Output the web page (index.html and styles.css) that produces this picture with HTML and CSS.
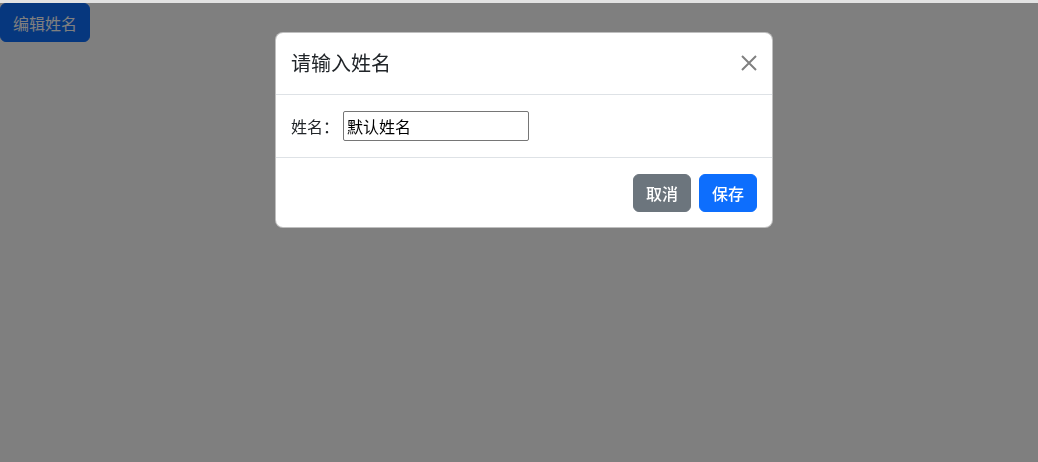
FILE: index.html
```html
<!DOCTYPE html>
<html lang="zh-CN">
<head>
<meta charset="utf-8">
<title>编辑姓名</title>
<link rel="stylesheet" href="styles.css">
</head>
<body>
<div class="page">
  <button class="btn btn-primary btn-open" type="button">编辑姓名</button>
</div>
<div class="backdrop"></div>
<div class="modal">
  <div class="modal-header">
    <h5 class="modal-title">请输入姓名</h5>
    <button class="btn-close" type="button" aria-label="关闭">
      <svg viewBox="0 0 16 16" width="16" height="16"><path d="M1 1 L15 15 M15 1 L1 15" stroke="#808080" stroke-width="2" fill="none"/></svg>
    </button>
  </div>
  <div class="modal-body">
    <label class="field-label">姓名：</label>
    <input class="field-input" type="text" value="默认姓名">
  </div>
  <div class="modal-footer">
    <button class="btn btn-secondary" type="button">取消</button>
    <button class="btn btn-primary" type="button">保存</button>
  </div>
</div>
</body>
</html>
```
FILE: styles.css
```css
* { box-sizing: border-box; }
html, body {
  margin: 0;
  height: 100%;
}
body {
  background: #e2e2e2;
  font-family: "Noto Sans CJK SC", "Noto Sans", sans-serif;
  font-size: 16px;
  color: #212529;
  overflow: hidden;
}
.page {
  background: #fff;
  margin-top: 3px;
  height: calc(100% - 3px);
}
.btn {
  font-family: inherit;
  font-size: 16px;
  line-height: 24px;
  padding: 6px 12px;
  border: 1px solid transparent;
  border-radius: 6px;
  color: #fff;
  cursor: pointer;
  font-weight: 500;
}
.btn-primary { background: #0d6efd; border-color: #0d6efd; }
.btn-secondary { background: #6c757d; border-color: #6c757d; }
.btn-open {
  font-weight: 400;
  width: 90px;
  height: 39px;
}
.backdrop {
  position: fixed;
  left: 0; right: 0; bottom: 0; top: 3px;
  background: rgba(0,0,0,.5);
}
.modal {
  position: fixed;
  top: 32px;
  left: 275px;
  width: 498px;
  background: #fff;
  border: 1px solid rgba(0,0,0,.25);
  border-radius: 8px;
  display: flex;
  flex-direction: column;
}
.modal-header {
  display: flex;
  align-items: center;
  padding: 15px 15px 16px;
  border-bottom: 1px solid #dee2e6;
}
.modal-title {
  margin: 0;
  font-size: 20px;
  line-height: 30px;
  font-weight: 400;
}
.btn-close {
  margin-left: auto;
  padding: 0;
  width: 16px;
  height: 16px;
  border: 0;
  background: transparent;
  display: flex;
  margin-top: -1px;
}
.btn-close svg { width: 16px; height: 16px; }
.modal-body {
  display: flex;
  align-items: center;
  padding: 16px 15px;
  border-bottom: 1px solid #dee2e6;
}
.field-label {
  font-size: 16px;
  line-height: 24px;
  width: 52px;
}
.field-input {
  width: 186px;
  height: 30px;
  font-family: inherit;
  font-size: 16px;
  padding: 1px 3px;
  border: 1px solid #767676;
  border-radius: 2px;
  color: #000;
}
.modal-footer {
  display: flex;
  justify-content: flex-end;
  gap: 8px;
  padding: 16px 15px 15px;
}
.modal-footer .btn {
  width: 58px;
  height: 38px;
  padding: 6px 0;
}
```
